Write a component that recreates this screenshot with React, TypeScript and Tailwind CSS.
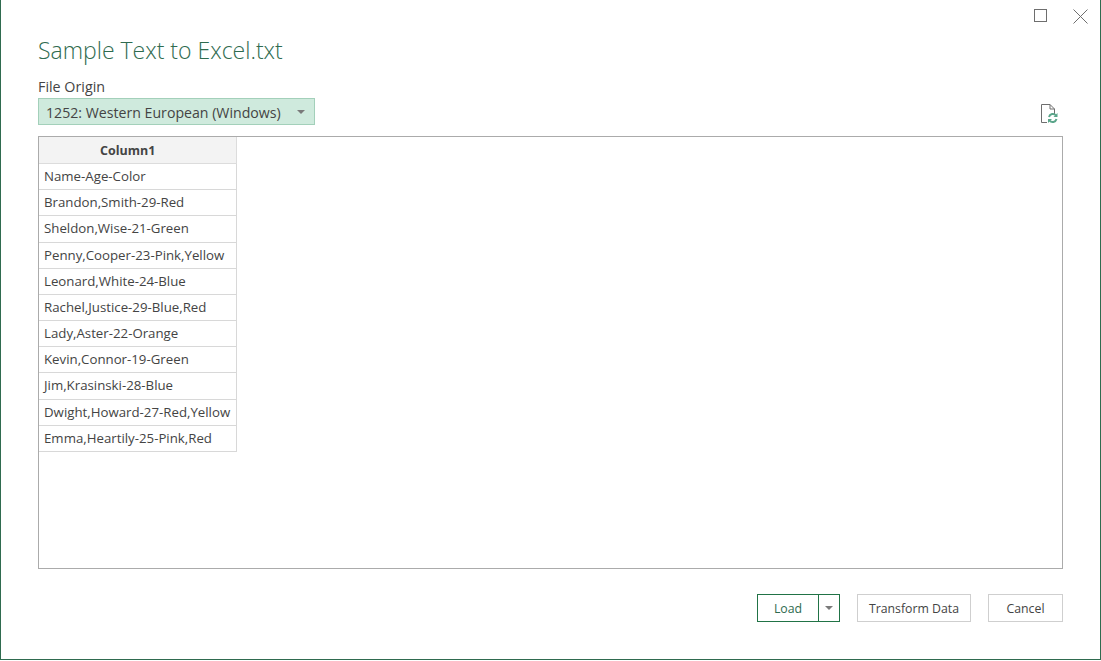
import React from 'react';

const rows = [
  'Name-Age-Color',
  'Brandon,Smith-29-Red',
  'Sheldon,Wise-21-Green',
  'Penny,Cooper-23-Pink,Yellow',
  'Leonard,White-24-Blue',
  'Rachel,Justice-29-Blue,Red',
  'Lady,Aster-22-Orange',
  'Kevin,Connor-19-Green',
  'Jim,Krasinski-28-Blue',
  'Dwight,Howard-27-Red,Yellow',
  'Emma,Heartily-25-Pink,Red',
];

const Caret = () => (
  <svg width="8" height="4" viewBox="0 0 8 4" className="block">
    <path d="M0 0h8L4 4z" fill="#7a7a7a" />
  </svg>
);

const App: React.FC = () => {
  return (
    <div className="w-[1101px] h-[660px] bg-white border-l border-r border-b border-[#2f6b4f] flex flex-col font-['Open_Sans','Noto_Sans',sans-serif] text-[#444]">
      {/* window buttons */}
      <div className="h-[32px] flex justify-end items-start pt-[9px] pr-[12px] gap-[26px]">
        <div className="w-[13px] h-[13px] border border-[#6e6e6e]" />
        <svg width="15" height="15" viewBox="0 0 15 15">
          <path d="M0.5 0.5L14.5 14.5M14.5 0.5L0.5 14.5" stroke="#6e6e6e" strokeWidth="1" />
        </svg>
      </div>

      <div className="flex-1 flex flex-col pl-[37px] pr-[37px]">
        <h1 className="h-[37px] text-[23px] leading-[36px] font-light text-[#2f6b4f] whitespace-nowrap">Sample Text to Excel.txt</h1>
        <div className="mt-[9px] h-[18px] text-[14.3px] leading-[18px] text-[#444]">File Origin</div>

        <div className="mt-[2px] h-[29px] flex justify-between items-start">
          <div className="w-[277px] h-[27px] bg-[#cfeadd] border border-[#a3d0ba] flex items-center pl-[7px]">
            <span className="text-[14.15px] leading-[25px] pt-[1px] text-[#444] w-[251px] whitespace-nowrap">1252: Western European (Windows)</span>
            <Caret />
          </div>
          <svg width="20" height="22" viewBox="0 0 20 22" className="mt-[5px] mr-[3px]">
            <path d="M1.5 19.5V1.5H10L14.5 6V11M10 1.5V6H14.5M1.5 19.5H7" fill="none" stroke="#6e6e6e" strokeWidth="1" />
            <path d="M9 14a4 4 0 0 1 7-1.5M16.5 16a4 4 0 0 1-7 1.5" fill="none" stroke="#5aa58a" strokeWidth="2" />
            <path d="M17.5 10v4h-4zM8 20v-4h4z" fill="#5aa58a" />
          </svg>
        </div>

        <div className="mt-[9px] h-[433px] border border-[#ababab]">
          <div className="w-[198px]">
            <div className="h-[27px] bg-[#f3f3f3] border-b border-r border-[#dcdcdc] pl-[61px] text-[12.5px] leading-[27px] font-bold text-[#444]">Column1</div>
            {rows.map(r => (
              <div key={r} className="h-[26.18px] border-b border-r border-[#d8d8d8] pl-[5px] text-[13.25px] leading-[25px] text-[#444] whitespace-nowrap">
                {r}
              </div>
            ))}
          </div>
        </div>

        <div className="mt-[25px] flex justify-end text-[12.3px] text-[#444]">
          <div className="h-[28px] w-[83px] flex border border-[#217346]">
            <div className="w-[61px] border-r border-[#217346] text-center leading-[27px] text-[#2f6b4f]">Load</div>
            <div className="flex-1 flex items-center justify-center">
              <Caret />
            </div>
          </div>
          <div className="ml-[17px] h-[28px] w-[114px] border border-[#cfcfcf] text-center leading-[27px]">Transform Data</div>
          <div className="ml-[17px] h-[28px] w-[75px] border border-[#cfcfcf] text-center leading-[27px]">Cancel</div>
        </div>
      </div>
    </div>
  );
};

export default App;
